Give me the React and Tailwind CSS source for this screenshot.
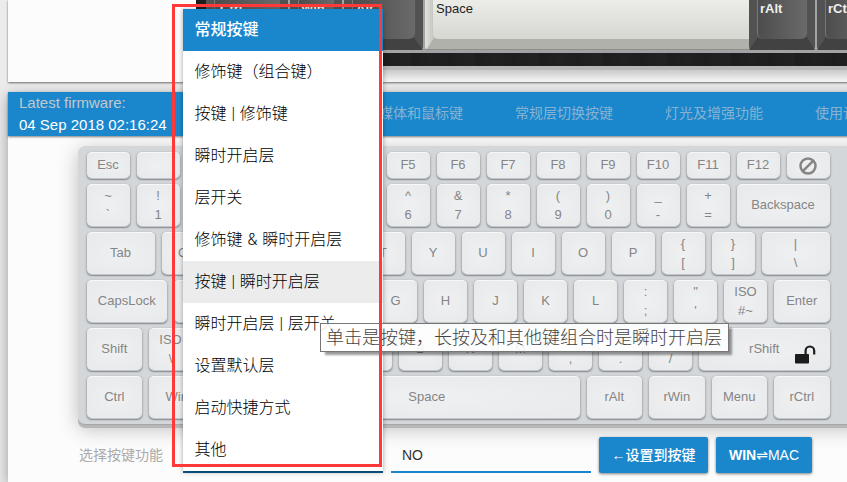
import React from "react";

const ROWS = [
  [["Esc", 1], ["", 1], ["F1", 1], ["F2", 1], ["F3", 1], ["F4", 1], ["F5", 1], ["F6", 1], ["F7", 1], ["F8", 1], ["F9", 1], ["F10", 1], ["F11", 1], ["F12", 1], ["ban", 1]],
  [["~\n`", 1], ["!\n1", 1], ["@\n2", 1], ["#\n3", 1], ["$\n4", 1], ["%\n5", 1], ["^\n6", 1], ["&\n7", 1], ["*\n8", 1], ["(\n9", 1], [")\n0", 1], ["_\n-", 1], ["+\n=", 1], ["Backspace", 2]],
  [["Tab", 1.5], ["Q", 1], ["W", 1], ["E", 1], ["R", 1], ["T", 1], ["Y", 1], ["U", 1], ["I", 1], ["O", 1], ["P", 1], ["{\n[", 1], ["}\n]", 1], ["|\n\\", 1.5]],
  [["CapsLock", 1.75], ["A", 1], ["S", 1], ["D", 1], ["F", 1], ["G", 1], ["H", 1], ["J", 1], ["K", 1], ["L", 1], [":\n;", 1], ["\"\n'", 1], ["ISO\n#~", 1], ["Enter", 1.25]],
  [["Shift", 1.25], ["ISO\n\\", 1], ["Z", 1], ["X", 1], ["C", 1], ["V", 1], ["B", 1], ["N", 1], ["M", 1], ["<\n,", 1], [">\n.", 1], ["?\n/", 1], ["rShift", 2.75]],
  [["Ctrl", 1.25], ["Win", 1.25], ["Alt", 1.25], ["Space", 6.25], ["rAlt", 1.25], ["rWin", 1.25], ["Menu", 1.25], ["rCtrl", 1.25]],
];

const TABS = ["多媒体和鼠标键", "常规层切换按键", "灯光及增强功能", "使用说明及下载"];

const OPTIONS = [
  "修饰键（组合键）",
  "按键 | 修饰键",
  "瞬时开启层",
  "层开关",
  "修饰键 & 瞬时开启层",
  "按键 | 瞬时开启层",
  "瞬时开启层 | 层开关",
  "设置默认层",
  "启动快捷方式",
  "其他",
];

function BanIcon() {
  return (
    <svg width="18" height="18" viewBox="0 0 18 18" fill="none" stroke="#858585" strokeWidth="2.5">
      <circle cx="9" cy="9" r="7.5" />
      <path d="M14.2 3.8 3.8 14.2" />
    </svg>
  );
}

function UnlockIcon() {
  return (
    <svg className="absolute right-[13.5px] bottom-[6px]" width="22" height="19" viewBox="0 0 22 19">
      <rect x="1" y="9" width="14" height="9.5" rx="0.8" fill="#1c1c1c" />
      <path d="M11.6 9V5.8a4.3 4.3 0 0 1 8.6 0V9.6" fill="none" stroke="#1c1c1c" strokeWidth="2.2" />
    </svg>
  );
}

function Key({ label, units, short }) {
  return (
    <div
      className={`relative flex shrink-0 items-center justify-center whitespace-pre rounded-[5px] border-t border-[#f8f8f8] bg-[radial-gradient(ellipse_at_center,#eff0f2_0%,#e8e9ea_100%)] text-center text-[13px] leading-[18.5px] text-[#858585] shadow-[0_1px_0_#c4c6c8,0_2px_1px_#8f9294,0_1px_2px_0.5px_#b0b3b5] ${short ? "h-[26px]" : "h-[42px]"}`}
      style={{ width: units * 50 - 7 }}
    >
      {label === "ban" ? <BanIcon /> : label}
      {label === "rShift" && <UnlockIcon />}
    </div>
  );
}

function DarkCap({ label, className, inset = "pl-[2px]" }) {
  return (
    <div className={`relative h-[50px] shrink-0 rounded-b-[4px] bg-[#525252] ${className}`}>
      <svg className="absolute inset-0 h-full w-full" viewBox="0 0 66 50" preserveAspectRatio="none">
        <path d="M0 50 9 37H58L66 50Z" fill="#424242" />
      </svg>
      <div className={`relative ml-[8px] mr-[8px] h-[39px] rounded-b-[6px] border-l border-[#777] bg-gradient-to-r from-[#4d4d4d] to-[#6a6a6a] text-[13px] font-bold leading-[17px] text-[#eee] ${inset}`}>
        {label}
      </div>
    </div>
  );
}

function PhotoBoard() {
  return (
    <div className="ml-[188px] h-[70px] w-[700px] bg-[#1d1d1d] shadow-[0_12px_10px_-6px_rgba(0,0,0,0.22)]">
      <div className="ml-[10px] flex h-[53px] gap-[2px] overflow-hidden bg-[#a1a3a5]">
        <DarkCap label="Ctrl" className="w-[82px]" inset="pl-[5px]" />
        <DarkCap label="Win" className="w-[52px]" />
        <DarkCap label="Alt" className="w-[79px]" inset="pl-[3px]" />
        <div className="relative h-[50px] w-[324px] shrink-0 rounded-bl-[4px] bg-gradient-to-r from-[#e3e4e0] to-[#b2b3ac] to-[4%]">
          <svg className="absolute inset-0" width="324" height="50">
            <path d="M1 50 9 38H324V50Z" fill="#b0b1aa" />
            <path d="M0 49.5H324" stroke="#8e8f8a" />
          </svg>
          <div className="relative ml-[8px] h-[39px] rounded-bl-[5px] bg-gradient-to-b from-[#ecede8] to-[#d6d7d1] pl-[3px] text-[13px] leading-[17px] text-[#222]">
            Space
          </div>
        </div>
        <DarkCap label="rAlt" className="-ml-[2px] w-[66px]" />
        <DarkCap label="rCtrl" className="w-[66px]" />
      </div>
      <div className="h-[13px] bg-[repeating-linear-gradient(90deg,#1f1f1f_0px,#222_21px,#1d1d1d_24px,#212121_43px,#1d1d1d_64px)]" />
      <div className="h-[4px] bg-[#b9b6b6]" />
    </div>
  );
}

export default function App() {
  return (
    <div lang="zh-CN" className="relative h-[482px] w-[847px] overflow-hidden bg-[#ececec] font-['Liberation_Sans','Noto_Sans_CJK_SC',sans-serif]">
      <div className="ml-[8px] flex w-[890px] flex-col gap-[10px]">
        <section className="h-[82px] bg-[#fcfcfc] [box-shadow:0_1px_2px_rgba(0,0,0,0.55)]">
          <div className="h-[82px] overflow-hidden">
            <PhotoBoard />
          </div>
        </section>

        <section className="h-[390px] bg-[#fcfcfc] shadow-[0_4px_14px_rgba(0,0,0,0.35)]">
          <nav className="relative flex h-[44px] overflow-hidden bg-[#1a87cd] [box-shadow:0_1px_2px_rgba(0,0,0,0.5)]">
            <div className="w-[331px] shrink-0 pl-[11px] text-[15px] leading-[22px]">
              <div className="text-[#c3c8cb]">Latest firmware:</div>
              <div className="text-white">04 Sep 2018 02:16:24</div>
            </div>
            {TABS.map((tab) => (
              <div key={tab} className="w-[150px] shrink-0 text-center text-[14px] leading-[42px] text-[#86b3d2]">
                {tab}
              </div>
            ))}
          </nav>

          <div className="ml-[70px] mt-[10px] flex h-[279px] w-[810px] flex-col gap-[6px] rounded-[7px] border-b border-[#a5a8aa] bg-[#d3d7da] pl-[8.5px] pt-[6px] shadow-[0_3px_0_#b7b7b7,0_4px_20px_rgba(0,0,0,0.25)]">
            {ROWS.map((row, r) => (
              <div key={r} className="flex gap-[7px]">
                {row.map(([label, units], k) => (
                  <Key key={k} label={label} units={units} short={r === 0} />
                ))}
              </div>
            ))}
          </div>

          <div className="ml-[71px] mt-[12px] flex h-[36px] text-[14px]">
            <div className="w-[104px] leading-[36px] text-[#aaa]">选择按键功能</div>
            <div className="w-[200px] border-b-2 border-[#0e5c90]" />
            <div className="ml-[8px] w-[200px] border-b-2 border-[#1a87cd] pl-[11px] leading-[36px] text-[#333]">NO</div>
            <button className="ml-[8px] w-[109px] rounded-[2px] bg-[#1a87cd] font-medium leading-[34px] text-white shadow-[0_1px_3px_rgba(0,0,0,0.5)]">
              ←设置到按键
            </button>
            <button className="ml-[8px] w-[96px] rounded-[2px] bg-[#1a87cd] leading-[36px] text-white shadow-[0_1px_3px_rgba(0,0,0,0.5)]">
              <b>WIN</b><span className="font-['DejaVu_Sans']">⇌</span>MAC
            </button>
          </div>
        </section>
      </div>

      <div className="absolute left-[183px] top-[9px] h-[462px] w-[200px] bg-white font-['Roboto','Noto_Sans_CJK_SC',sans-serif] text-[16px] leading-[41px] [word-spacing:1px] shadow-[0_1px_5px_rgba(0,0,0,0.35)]">
        <div className="h-[42px] bg-[#1a87cd] pl-[11.5px] font-medium text-white">常规按键</div>
        {OPTIONS.map((option, i) => (
          <div key={option} className={`h-[42px] whitespace-nowrap pl-[11.5px] font-light text-black ${i === 5 ? "bg-[#ececec]" : ""}`}>
            {option}
          </div>
        ))}
      </div>

      <div className="absolute left-[320px] top-[323px] h-[29px] w-[409px] whitespace-nowrap border border-[#777] bg-white/90 pl-[5px] text-[18px] font-light leading-[28px] text-[#444] shadow-[4px_4px_2px_-1px_rgba(0,0,0,0.4)]">
        单击是按键，长按及和其他键组合时是瞬时开启层
      </div>

      <div className="pointer-events-none absolute left-[172px] top-[4px] h-[463px] w-[210px] border-[3px] border-[#ff3838]" />
    </div>
  );
}
